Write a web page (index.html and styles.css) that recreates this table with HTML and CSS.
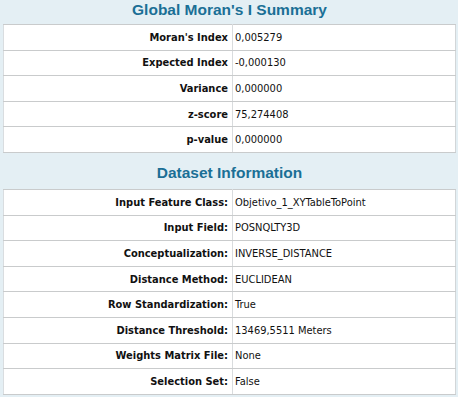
FILE: index.html
```html
<!DOCTYPE html>
<html>
<head>
<meta charset="utf-8">
<link rel="stylesheet" href="styles.css">
</head>
<body>
<div class="page">
  <h2 class="title">Global Moran's I Summary</h2>
  <table class="grid">
    <tr><th>Moran's Index</th><td>0,005279</td></tr>
    <tr><th>Expected Index</th><td>-0,000130</td></tr>
    <tr><th>Variance</th><td>0,000000</td></tr>
    <tr><th>z-score</th><td>75,274408</td></tr>
    <tr><th>p-value</th><td>0,000000</td></tr>
  </table>
  <h2 class="title title-2">Dataset Information</h2>
  <table class="grid">
    <tr><th>Input Feature Class:</th><td>Objetivo_1_XYTableToPoint</td></tr>
    <tr><th>Input Field:</th><td>POSNQLTY3D</td></tr>
    <tr><th>Conceptualization:</th><td>INVERSE_DISTANCE</td></tr>
    <tr><th>Distance Method:</th><td>EUCLIDEAN</td></tr>
    <tr><th>Row Standardization:</th><td>True</td></tr>
    <tr><th>Distance Threshold:</th><td>13469,5511 Meters</td></tr>
    <tr><th>Weights Matrix File:</th><td>None</td></tr>
    <tr><th>Selection Set:</th><td>False</td></tr>
  </table>
</div>
</body>
</html>
```

FILE: styles.css
```css
html, body {
  margin: 0;
  padding: 0;
  background: #e4eff4;
}
.page {
  padding: 0 2px 0 3px;
  font-family: "DejaVu Sans Condensed", "DejaVu Sans", sans-serif;
}
.title {
  margin: 0;
  height: 24px;
  line-height: 20px;
  text-align: center;
  font-family: "Liberation Sans", Arial, sans-serif;
  font-size: 15.5px;
  font-weight: bold;
  color: #1b6f96;
}
.title-2 {
  height: 36px;
  line-height: 40px;
}
.grid {
  width: 100%;
  border-collapse: collapse;
  background: #ffffff;
  border-left: 1px solid #d9dde0;
  border-right: 1px solid #d2d6d8;
  font-size: 11px;
  color: #111;
}
.grid tr {
  height: 25.6px;
}
.grid th, .grid td {
  border-top: 1px solid #c9cbcc;
  border-bottom: 1px solid #c9cbcc;
  padding: 0 4px 0 2px;
}
.grid th {
  width: 222px;
  text-align: right;
  font-weight: bold;
  border-right: 1px solid #d9dcde;
}
.grid td {
  text-align: left;
}
```
